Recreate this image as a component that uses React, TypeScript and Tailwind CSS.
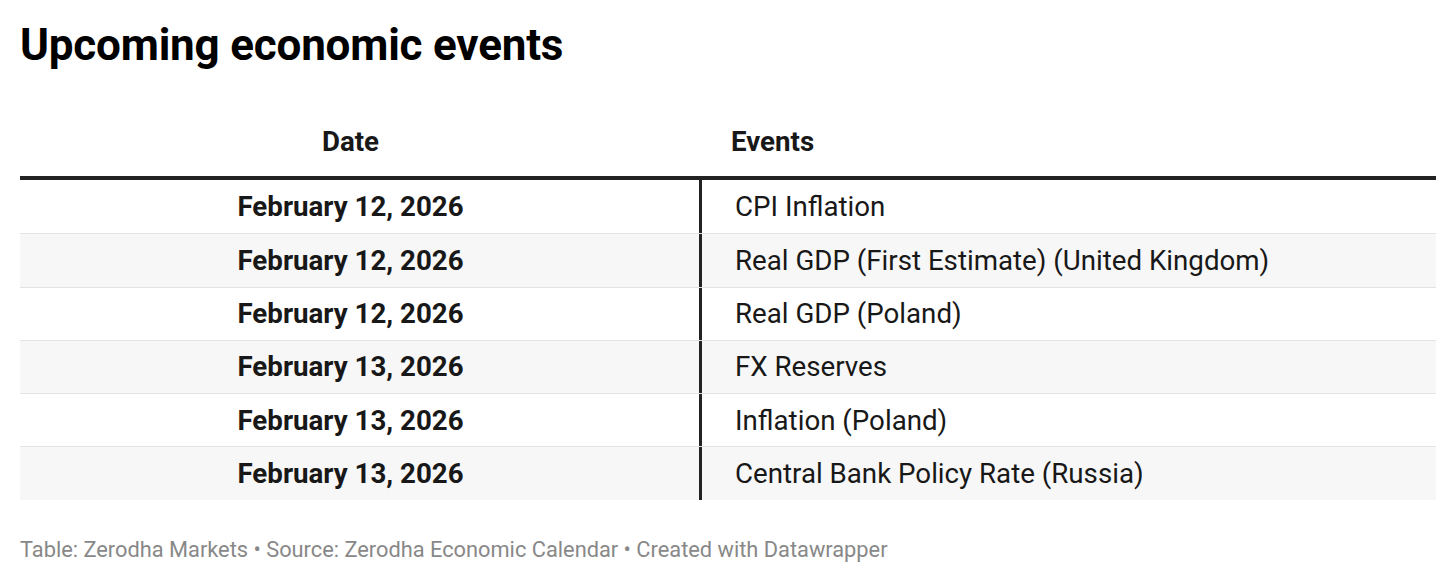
const FONT = "font-['Roboto',sans-serif]"

const rows = [
  { date: "February 12, 2026", event: "CPI Inflation" },
  { date: "February 12, 2026", event: "Real GDP (First Estimate) (United Kingdom)" },
  { date: "February 12, 2026", event: "Real GDP (Poland)" },
  { date: "February 13, 2026", event: "FX Reserves" },
  { date: "February 13, 2026", event: "Inflation (Poland)" },
  { date: "February 13, 2026", event: "Central Bank Policy Rate (Russia)" },
]

export default function App() {
  return (
    <div className={`${FONT} h-[585px] w-[1456px] bg-white px-5 text-[#181818]`}>
      <h1 className="pt-[20px] text-[44px] font-bold leading-[50px] tracking-[-0.2px] text-black">
        Upcoming economic events
      </h1>

      <div className="mt-[40px] w-[1416px]">
        {/* header */}
        <div className="flex h-[70px] items-end border-b-4 border-[#222] pb-[18px]">
          <div className="w-[679px] pr-[18px] text-center text-[27.7px] font-bold leading-[32px]">Date</div>
          <div className="pl-[32px] text-[27.7px] font-bold leading-[32px]">Events</div>
        </div>

        {/* body */}
        <div>
          {rows.map((r, i) => (
            <div
              key={i}
              className={`flex h-[53.3px] items-center ${i % 2 === 1 ? "bg-[#f7f7f7]" : "bg-white"} ${
                i > 0 ? "border-t border-[#e3e3e3]" : ""
              }`}
            >
              <div className="w-[679px] pr-[18px] text-center text-[27.7px] font-bold">{r.date}</div>
              <div className="flex h-full items-center border-l-[3px] border-[#222] pl-[33px] text-[27.7px]">
                {r.event}
              </div>
            </div>
          ))}
        </div>
      </div>

      <p className="mt-[37px] text-[21.8px] leading-[26px] text-[#888]">
        Table: Zerodha Markets • Source: Zerodha Economic Calendar • Created with Datawrapper
      </p>
    </div>
  )
}
